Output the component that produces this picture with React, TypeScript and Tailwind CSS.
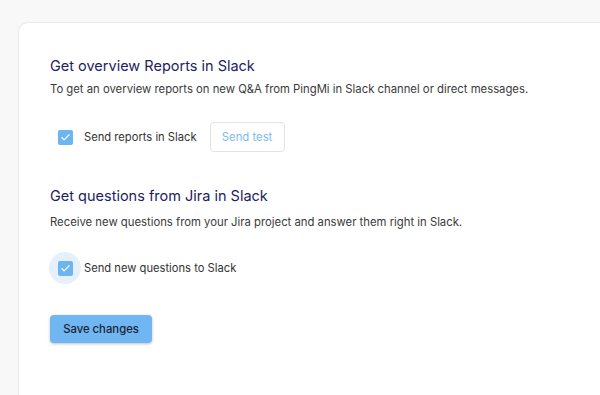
import { Check } from "lucide-react";

function Checkbox({ halo }: { halo?: boolean }) {
  return (
    <span
      className={
        "flex h-[32px] w-[32px] shrink-0 items-center justify-center rounded-full " +
        (halo ? "bg-[#e6f0fb]" : "")
      }
    >
      <span className="flex h-[15px] w-[15px] items-center justify-center rounded-[2px] bg-[#6db5f1]">
        <Check className="h-[11px] w-[11px] text-white" strokeWidth={2.5} />
      </span>
    </span>
  );
}

export default function App() {
  return (
    <div
      className="h-[395px] w-[600px] overflow-hidden bg-[#f8f8f8] pl-[18px] pt-[22px]"
      style={{ fontFamily: "Inter, 'Noto Sans', sans-serif" }}
    >
      <div className="h-[400px] rounded-tl-[10px] border-l border-t border-[#e8e8e8] bg-white pl-[31px] pt-[32px]">
        <section>
          <h2 className="text-[14.5px] leading-[22px] font-normal text-[#1c2260]">
            Get overview Reports in Slack
          </h2>
          <p className="mt-[4px] text-[11.3px] leading-[16px] text-[#3a3a3a]">
            To get an overview reports on new Q&amp;A from PingMi in Slack channel or direct messages.
          </p>
          <div className="mt-[24px] flex items-center">
            <span className="ml-[-1px]">
              <Checkbox />
            </span>
            <span className="ml-[3px] text-[11.2px] text-[#333]">Send reports in Slack</span>
            <button className="ml-[13px] h-[30px] w-[75px] rounded-[4px] border border-[#e3e3e3] text-[11.3px] text-[#7cbaf2]">
              Send test
            </button>
          </div>
        </section>

        <section className="mt-[32px]">
          <h2 className="text-[14.5px] leading-[22px] font-normal text-[#1c2260]">
            Get questions from Jira in Slack
          </h2>
          <p className="mt-[7px] text-[11.3px] leading-[16px] text-[#3a3a3a]">
            Receive new questions from your Jira project and answer them right in Slack.
          </p>
          <div className="mt-[22px] flex items-center">
            <span className="ml-[-1px]">
              <Checkbox halo />
            </span>
            <span className="ml-[3px] text-[11.2px] text-[#333]">Send new questions to Slack</span>
          </div>
        </section>

        <button className="mt-[31px] h-[28px] w-[102px] rounded-[4px] bg-[#6fb6f2] text-[11.3px] font-medium text-[#1b1f33] shadow-[0_1px_3px_rgba(0,0,0,0.25)]">
          Save changes
        </button>
      </div>
    </div>
  );
}
